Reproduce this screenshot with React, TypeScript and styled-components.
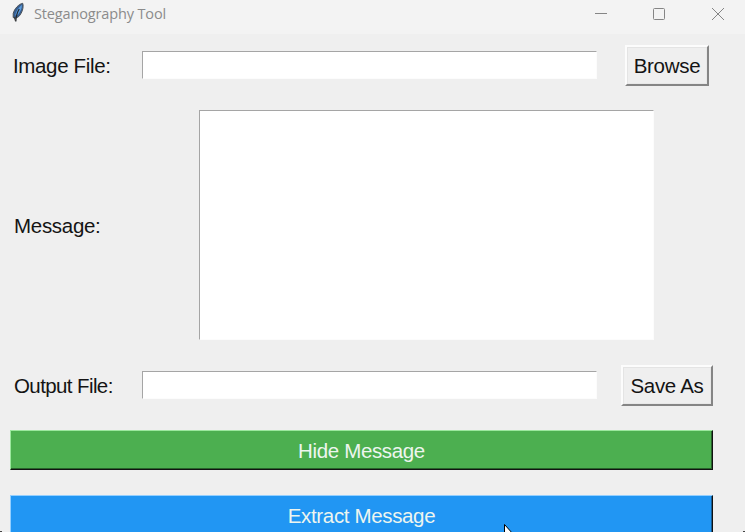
import React from "react";
import styled, { createGlobalStyle } from "styled-components";

const GlobalStyle = createGlobalStyle`
  * { box-sizing: border-box; }
  html, body { margin: 0; padding: 0; overflow: hidden; background: #efefef; }
`;

const Window = styled.div`
  position: relative;
  width: 745px;
  height: 532px;
  overflow: hidden;
  background: #efefef;
  font-family: "Liberation Sans", Arial, sans-serif;
  font-size: 20.5px;
  color: #141414;
`;

const TitleBar = styled.header`
  display: flex;
  align-items: flex-start;
  height: 34px;
  padding-left: 10px;
  background: #f3f3f3;
`;

const Title = styled.span`
  flex: 1;
  margin-left: 8px;
  font: 14.5px/28px "Open Sans", "Noto Sans", sans-serif;
  letter-spacing: -0.14px;
  color: #8b8b8b;
`;

const Controls = styled.div`
  display: flex;
  gap: 34px;
  padding: 2px 15px 0 0;
`;

const Form = styled.main`
  display: grid;
  grid-template-columns: 132px 479px 92px;
  grid-template-rows: 40px 230px 40px 40px 40px;
  row-gap: 25px;
  padding: 11px 0 0 10px;
  align-items: center;
`;

const Label = styled.label<{ $inset?: number; $tracking: number }>`
  padding: 2px 0 0 ${(p) => p.$inset ?? 4}px;
  line-height: 24px;
  white-space: nowrap;
  letter-spacing: ${(p) => p.$tracking}px;
`;

const Entry = styled.input`
  width: 455px;
  height: 28px;
  margin: 0;
  padding: 0 4px;
  border: 1px solid;
  border-color: #a5a5a5 #fcfcfc #fcfcfc #a5a5a5;
  border-radius: 0;
  outline: 0;
  background: #fff;
  font: inherit;
`;

const MessageBox = styled.textarea`
  grid-column: 2 / 4;
  justify-self: start;
  width: 455px;
  height: 230px;
  margin: 0 0 0 57px;
  padding: 2px 4px;
  border: 1px solid;
  border-color: #a5a5a5 #fcfcfc #fcfcfc #a5a5a5;
  border-radius: 0;
  outline: 0;
  resize: none;
  background: #fff;
  font: inherit;
`;

const FileButton = styled.button<{ $width: number }>`
  justify-self: center;
  width: ${(p) => p.$width}px;
  height: 41px;
  margin: 0;
  padding: 2px 0 0;
  border: 2px solid;
  border-color: #fcfcfc #858585 #858585 #fcfcfc;
  border-radius: 0;
  background: #efefef;
  box-shadow: inset 1px 1px #e4e4e4, inset -1px -1px #e8e8e8;
  color: #141414;
  font: inherit;
  line-height: 24px;
  letter-spacing: -0.3px;
  white-space: nowrap;
`;

const ActionButton = styled.button<{ $fill: string; $light: string; $dark: string }>`
  grid-column: 1 / 4;
  width: 703px;
  height: 40px;
  margin: 0;
  padding: 2px 0 0;
  border: 1px solid;
  border-color: ${(p) => p.$light} #111 #111 ${(p) => p.$light};
  border-radius: 0;
  background: ${(p) => p.$fill};
  box-shadow: inset -1px -1px ${(p) => p.$dark};
  color: #edf5ef;
  font: inherit;
  line-height: 24px;
  letter-spacing: -0.35px;
`;

const Pointer = styled.svg`
  position: absolute;
  left: 504px;
  top: 524px;
`;

const Corner = styled.i<{ $side: "left" | "right" }>`
  position: absolute;
  bottom: 0;
  ${(p) => p.$side}: 0;
  width: 2px;
  height: 1px;
  background: #444;
`;

const Feather = () => (
  <svg width="16" height="24" viewBox="0 0 16 24">
    <path d="M12.7 3.3C9 4 4.4 8.5 3.2 13.5L3.2 17.5L5.3 18.4L8.8 16.5C12 13 14 7.5 12.7 3.3Z" fill="#365e91" stroke="#4b5157" strokeWidth="1" />
    <path d="M11.8 4.8C8.3 8 6.2 11 5.1 15.5L8.2 14.6C10.6 11.2 12.2 8 11.8 4.8Z" fill="#5c9ddd" />
    <path d="M9.2 9C7.3 12.2 6 15 5.8 21.5" fill="none" stroke="#20272e" strokeWidth="1.2" />
    <path d="M4.4 17L5.6 21" stroke="#3a3a3a" strokeWidth="1.2" />
  </svg>
);

const ControlIcon = ({ kind }: { kind: "minimize" | "maximize" | "close" }) => (
  <svg width="24" height="24" viewBox="0 0 24 24" fill="none" stroke="#858585" strokeWidth="1">
    {kind === "minimize" && <path d="M5 11.5H17" />}
    {kind === "maximize" && <rect x="5.5" y="6.5" width="11" height="11" rx="1" />}
    {kind === "close" && <path d="M6 6L18 18M18 6L6 18" />}
  </svg>
);

export default function App() {
  return (
    <>
      <GlobalStyle />
      <Window>
        <TitleBar>
          <Feather />
          <Title>Steganography Tool</Title>
          <Controls>
            <ControlIcon kind="minimize" />
            <ControlIcon kind="maximize" />
            <ControlIcon kind="close" />
          </Controls>
        </TitleBar>
        <Form>
          <Label htmlFor="image" $inset={3} $tracking={-0.35}>Image File:</Label>
          <Entry id="image" />
          <FileButton $width={84}>Browse</FileButton>
          <Label htmlFor="message" $tracking={-0.3}>Message:</Label>
          <MessageBox id="message" />
          <Label htmlFor="output" $tracking={-0.6}>Output File:</Label>
          <Entry id="output" />
          <FileButton $width={92}>Save As</FileButton>
          <ActionButton $fill="#4caf50" $light="#9be89e" $dark="#28622b">Hide Message</ActionButton>
          <ActionButton $fill="#2196f3" $light="#93cfff" $dark="#175d94">Extract Message</ActionButton>
        </Form>
        <Pointer width="12" height="18" viewBox="0 0 12 18">
          <path d="M.5 .5V16L4.5 12.2H11Z" fill="#fff" stroke="#000" />
        </Pointer>
        <Corner $side="left" />
        <Corner $side="right" />
      </Window>
    </>
  );
}
